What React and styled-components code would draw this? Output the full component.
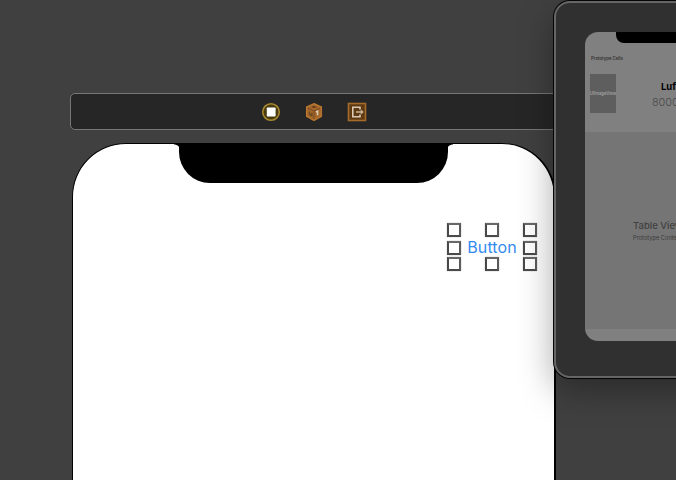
import React from "react";
import styled, { createGlobalStyle } from "styled-components";

const GlobalStyle = createGlobalStyle`
  * { box-sizing: border-box; }
  html, body { margin: 0; height: 480px; overflow: hidden; background: #404040; }
  body { font-family: Inter, "Liberation Sans", sans-serif; }
`;

const Canvas = styled.main`
  position: relative;
  width: 676px;
  height: 480px;
  overflow: hidden;
  background: #404040;
`;

const Scene = styled.section`
  display: flex;
  flex-direction: column;
  gap: 13px;
  width: 487px;
  margin-left: 70px;
  padding-top: 93px;
`;

const SceneDock = styled.header`
  display: flex;
  align-items: center;
  justify-content: center;
  gap: 23px;
  height: 37px;
  width: 487px;
  border: 1px solid #777;
  border-radius: 5px;
  background: #262626;
`;

const DockIcon = styled.svg`
  display: block;
  width: 20px;
  height: 20px;
`;

const Phone = styled.div`
  display: flex;
  flex-direction: column;
  width: 484px;
  height: 560px;
  margin-left: 2px;
  border: 1.5px solid #000;
  border-width: 1px 2px 1px 1px;
  border-radius: 54px;
  background: #fff;
`;

const Notch = styled.div`
  position: relative;
  width: 269px;
  height: 39px;
  margin-left: 106px;
  border-radius: 0 0 31px 31px;
  background: #000;
  &::before, &::after {
    content: "";
    position: absolute;
    top: 0;
    width: 5px;
    height: 7px;
  }
  &::before {
    left: -5px;
    background: radial-gradient(circle at 0 100%, transparent 6px, #000 7px);
  }
  &::after {
    right: -5px;
    background: radial-gradient(circle at 100% 100%, transparent 6px, #000 7px);
  }
`;

const Selection = styled.div`
  display: grid;
  grid-template-columns: 14px 48px 14px;
  grid-template-rows: 14px 18px 14px;
  row-gap: 1px;
  column-gap: 7px;
  justify-items: center;
  align-items: center;
  width: 90px;
  margin: 40px 0 0 374px;
`;

const Handle = styled.span`
  width: 14px;
  height: 14px;
  border: 2px solid;
  border-color: #686868 #5a5a5a #4a4a4a #484848;
  background: #fff;
  box-shadow: 0 0 1px #999;
  &:nth-child(4), &:nth-child(6) {
    margin-top: 2px;
  }
`;

const ButtonLabel = styled.span`
  font-size: 16px;
  line-height: 16px;
  letter-spacing: 0.1px;
  color: #338af0;
  white-space: nowrap;
`;

const Popup = styled.aside`
  position: absolute;
  left: 554px;
  top: 1px;
  width: 300px;
  height: 377px;
  padding: 29px;
  border: 2px solid #666;
  border-radius: 16px;
  background: #303030;
  box-shadow: 0 0 0 1px #050505, 0 12px 35px rgba(0, 0, 0, 0.35);
`;

const Preview = styled.div`
  display: flex;
  flex-direction: column;
  height: 309px;
  border-radius: 13px;
  overflow: hidden;
  background: #808080;
`;

const PreviewHeader = styled.div`
  flex: 0 0 100px;
  overflow: hidden;
`;

const PreviewNotch = styled.div`
  height: 11px;
  width: 150px;
  margin-left: 31px;
  border-radius: 0 0 0 8px;
  background: #000;
`;

const TinyTitle = styled.div`
  margin: 13px 0 0 6px;
  font-size: 4.3px;
  line-height: 6px;
  font-weight: 600;
  color: #333;
`;

const ProductRow = styled.div`
  display: flex;
  gap: 36px;
  padding: 12px 0 0 5px;
`;

const Thumbnail = styled.div`
  display: flex;
  align-items: center;
  justify-content: center;
  width: 26px;
  height: 39px;
  overflow: hidden;
  background: #5e5e5e;
  color: #a0a0a0;
  font-size: 4.2px;
  font-weight: 600;
`;

const Details = styled.div`
  padding-top: 6px;
  white-space: nowrap;
`;

const Name = styled.div`
  padding-left: 9px;
  font-size: 9.5px;
  line-height: 14px;
  font-weight: 700;
  color: #000;
`;

const Price = styled.div`
  margin-top: 2px;
  font-size: 10.8px;
  line-height: 14px;
  font-weight: 300;
  color: #484848;
`;

const TableArea = styled.div`
  flex: 1;
  padding: 88px 0 0 48px;
  background: #757575;
  white-space: nowrap;
`;

const TableTitle = styled.div`
  font-size: 9.5px;
  line-height: 12px;
  font-weight: 500;
  color: #404040;
`;

const TableSubtitle = styled.div`
  margin-top: 2px;
  font-size: 5.7px;
  line-height: 8px;
  color: #3c3c3c;
`;

const HomeArea = styled.div`
  flex: 0 0 12px;
`;

const ControllerIcon = () => (
  <DockIcon viewBox="0 0 20 20">
    <circle cx="10" cy="10" r="8.3" fill="#4a3c10" stroke="#a88930" strokeWidth="1.6" />
    <rect x="5.8" y="5.6" width="8.8" height="8.8" rx=".7" fill="#fff" />
  </DockIcon>
);

const ResponderIcon = () => (
  <DockIcon viewBox="0 0 20 20">
    <path d="M10 1.6 17.4 5v9.4L10 18.5 2.6 14.4V5Z" fill="#a5682a" stroke="#b87630" strokeWidth="1.3" />
    <path d="M4 6.2 10 9l6-2.8M10 9v8" fill="none" stroke="#774d25" strokeWidth="1.1" />
    <path d="m7 5 3-1 3 1-3 1Z" fill="#58371a" />
    <path d="M5.5 9.5v3l2.3 1.2v-3" fill="none" stroke="#6a4824" strokeWidth="1.4" />
    <path d="m12 10 1.6-.8v4" fill="none" stroke="#ddd0bb" strokeWidth="1.4" />
  </DockIcon>
);

const ExitIcon = () => (
  <DockIcon viewBox="0 0 20 20">
    <rect x="1.5" y="1.5" width="17" height="17" fill="#5e3911" stroke="#a66c2c" strokeWidth="1.6" />
    <path d="M13 7.5V5.2H5.8v9.6H13v-2.3" fill="none" stroke="#d9cbb7" strokeWidth="1.6" />
    <path d="M9 10h6.8m-2-1.8 2 1.8-2 1.8" fill="none" stroke="#c9b698" strokeWidth="1.3" />
  </DockIcon>
);

const Handles = ({ count }) => Array.from({ length: count }, (_, index) => <Handle key={index} />);

export default function App() {
  return (
    <>
      <GlobalStyle />
      <Canvas>
        <Scene>
          <SceneDock>
            <ControllerIcon />
            <ResponderIcon />
            <ExitIcon />
          </SceneDock>
          <Phone>
            <Notch />
            <Selection>
              <Handles count={4} />
              <ButtonLabel>Button</ButtonLabel>
              <Handles count={4} />
            </Selection>
          </Phone>
        </Scene>
        <Popup>
          <Preview>
            <PreviewHeader>
              <PreviewNotch />
              <TinyTitle>Prototype Cells</TinyTitle>
              <ProductRow>
                <Thumbnail>UIImageView</Thumbnail>
                <Details>
                  <Name>Luffy</Name>
                  <Price>8000</Price>
                </Details>
              </ProductRow>
            </PreviewHeader>
            <TableArea>
              <TableTitle>Table View</TableTitle>
              <TableSubtitle>Prototype Content</TableSubtitle>
            </TableArea>
            <HomeArea />
          </Preview>
        </Popup>
      </Canvas>
    </>
  );
}
